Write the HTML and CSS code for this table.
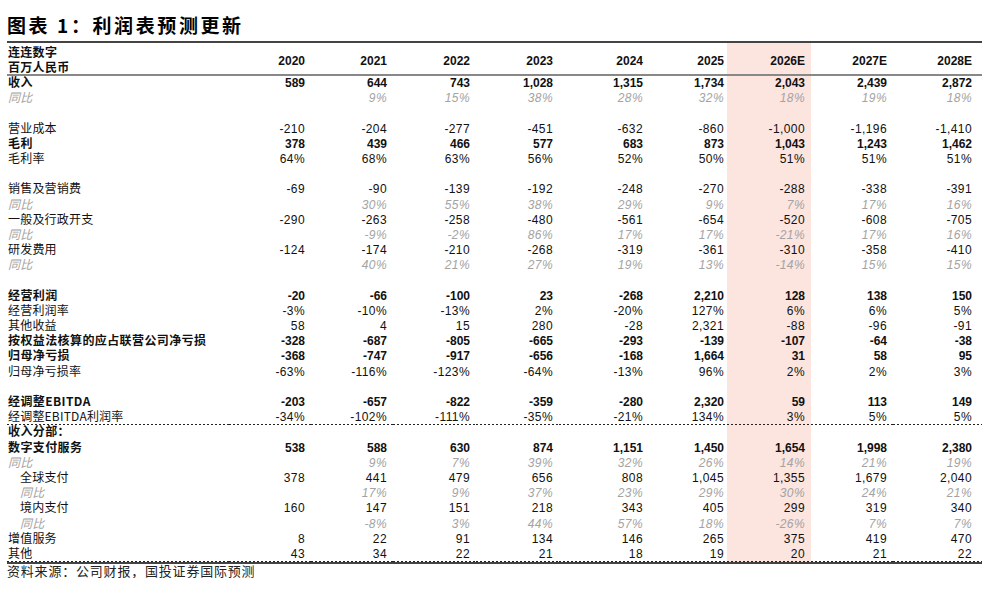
FILE: index.html
```html
<!DOCTYPE html>
<html lang="zh">
<head>
  <meta charset="UTF-8">
  <meta name="viewport" content="width=device-width, initial-scale=1.0">
  <title>利润表预测更新</title>
  <link rel="stylesheet" href="styles.css">
</head>
<body>
  <h1 class="title">图表 1：利润表预测更新</h1>
  <div class="sheet">
    <table class="fin">
      <colgroup>
        <col class="c-label">
        <col class="c-82"><col class="c-82"><col class="c-83"><col class="c-83">
        <col class="c-88"><col class="c-80"><col class="c-84"><col class="c-82"><col class="c-89">
      </colgroup>
      <thead>
        <tr>
          <th class="label"><div class="unit">连连数字<br>百万人民币</div></th>
          <th>2020</th><th>2021</th><th>2022</th><th>2023</th><th>2024</th><th>2025</th>
          <th class="est">2026E</th><th>2027E</th><th>2028E</th>
        </tr>
      </thead>
      <tbody>
        <tr class="bold">
          <td class="label">收入</td>
          <td>589</td><td>644</td><td>743</td><td>1,028</td><td>1,315</td><td>1,734</td><td class="est">2,043</td><td>2,439</td><td>2,872</td>
        </tr>
        <tr class="yoy">
          <td class="label">同比</td>
          <td></td><td>9%</td><td>15%</td><td>38%</td><td>28%</td><td>32%</td><td class="est">18%</td><td>19%</td><td>18%</td>
        </tr>
        <tr>
          <td class="label"></td>
          <td></td><td></td><td></td><td></td><td></td><td></td><td class="est"></td><td></td><td></td>
        </tr>
        <tr>
          <td class="label">营业成本</td>
          <td>-210</td><td>-204</td><td>-277</td><td>-451</td><td>-632</td><td>-860</td><td class="est">-1,000</td><td>-1,196</td><td>-1,410</td>
        </tr>
        <tr class="bold">
          <td class="label">毛利</td>
          <td>378</td><td>439</td><td>466</td><td>577</td><td>683</td><td>873</td><td class="est">1,043</td><td>1,243</td><td>1,462</td>
        </tr>
        <tr>
          <td class="label">毛利率</td>
          <td>64%</td><td>68%</td><td>63%</td><td>56%</td><td>52%</td><td>50%</td><td class="est">51%</td><td>51%</td><td>51%</td>
        </tr>
        <tr>
          <td class="label"></td>
          <td></td><td></td><td></td><td></td><td></td><td></td><td class="est"></td><td></td><td></td>
        </tr>
        <tr>
          <td class="label">销售及营销费</td>
          <td>-69</td><td>-90</td><td>-139</td><td>-192</td><td>-248</td><td>-270</td><td class="est">-288</td><td>-338</td><td>-391</td>
        </tr>
        <tr class="yoy">
          <td class="label">同比</td>
          <td></td><td>30%</td><td>55%</td><td>38%</td><td>29%</td><td>9%</td><td class="est">7%</td><td>17%</td><td>16%</td>
        </tr>
        <tr>
          <td class="label">一般及行政开支</td>
          <td>-290</td><td>-263</td><td>-258</td><td>-480</td><td>-561</td><td>-654</td><td class="est">-520</td><td>-608</td><td>-705</td>
        </tr>
        <tr class="yoy">
          <td class="label">同比</td>
          <td></td><td>-9%</td><td>-2%</td><td>86%</td><td>17%</td><td>17%</td><td class="est">-21%</td><td>17%</td><td>16%</td>
        </tr>
        <tr>
          <td class="label">研发费用</td>
          <td>-124</td><td>-174</td><td>-210</td><td>-268</td><td>-319</td><td>-361</td><td class="est">-310</td><td>-358</td><td>-410</td>
        </tr>
        <tr class="yoy">
          <td class="label">同比</td>
          <td></td><td>40%</td><td>21%</td><td>27%</td><td>19%</td><td>13%</td><td class="est">-14%</td><td>15%</td><td>15%</td>
        </tr>
        <tr>
          <td class="label"></td>
          <td></td><td></td><td></td><td></td><td></td><td></td><td class="est"></td><td></td><td></td>
        </tr>
        <tr class="bold">
          <td class="label">经营利润</td>
          <td>-20</td><td>-66</td><td>-100</td><td>23</td><td>-268</td><td>2,210</td><td class="est">128</td><td>138</td><td>150</td>
        </tr>
        <tr>
          <td class="label">经营利润率</td>
          <td>-3%</td><td>-10%</td><td>-13%</td><td>2%</td><td>-20%</td><td>127%</td><td class="est">6%</td><td>6%</td><td>5%</td>
        </tr>
        <tr>
          <td class="label">其他收益</td>
          <td>58</td><td>4</td><td>15</td><td>280</td><td>-28</td><td>2,321</td><td class="est">-88</td><td>-96</td><td>-91</td>
        </tr>
        <tr class="bold">
          <td class="label">按权益法核算的应占联营公司净亏损</td>
          <td>-328</td><td>-687</td><td>-805</td><td>-665</td><td>-293</td><td>-139</td><td class="est">-107</td><td>-64</td><td>-38</td>
        </tr>
        <tr class="bold">
          <td class="label">归母净亏损</td>
          <td>-368</td><td>-747</td><td>-917</td><td>-656</td><td>-168</td><td>1,664</td><td class="est">31</td><td>58</td><td>95</td>
        </tr>
        <tr>
          <td class="label">归母净亏损率</td>
          <td>-63%</td><td>-116%</td><td>-123%</td><td>-64%</td><td>-13%</td><td>96%</td><td class="est">2%</td><td>2%</td><td>3%</td>
        </tr>
        <tr>
          <td class="label"></td>
          <td></td><td></td><td></td><td></td><td></td><td></td><td class="est"></td><td></td><td></td>
        </tr>
        <tr class="bold">
          <td class="label">经调整EBITDA</td>
          <td>-203</td><td>-657</td><td>-822</td><td>-359</td><td>-280</td><td>2,320</td><td class="est">59</td><td>113</td><td>149</td>
        </tr>
        <tr class="dashed">
          <td class="label">经调整EBITDA利润率</td>
          <td>-34%</td><td>-102%</td><td>-111%</td><td>-35%</td><td>-21%</td><td>134%</td><td class="est">3%</td><td>5%</td><td>5%</td>
        </tr>
        <tr class="bold">
          <td class="label">收入分部：</td>
          <td></td><td></td><td></td><td></td><td></td><td></td><td class="est"></td><td></td><td></td>
        </tr>
        <tr class="bold">
          <td class="label">数字支付服务</td>
          <td>538</td><td>588</td><td>630</td><td>874</td><td>1,151</td><td>1,450</td><td class="est">1,654</td><td>1,998</td><td>2,380</td>
        </tr>
        <tr class="yoy">
          <td class="label">同比</td>
          <td></td><td>9%</td><td>7%</td><td>39%</td><td>32%</td><td>26%</td><td class="est">14%</td><td>21%</td><td>19%</td>
        </tr>
        <tr>
          <td class="label sub">全球支付</td>
          <td>378</td><td>441</td><td>479</td><td>656</td><td>808</td><td>1,045</td><td class="est">1,355</td><td>1,679</td><td>2,040</td>
        </tr>
        <tr class="yoy">
          <td class="label sub">同比</td>
          <td></td><td>17%</td><td>9%</td><td>37%</td><td>23%</td><td>29%</td><td class="est">30%</td><td>24%</td><td>21%</td>
        </tr>
        <tr>
          <td class="label sub">境内支付</td>
          <td>160</td><td>147</td><td>151</td><td>218</td><td>343</td><td>405</td><td class="est">299</td><td>319</td><td>340</td>
        </tr>
        <tr class="yoy">
          <td class="label sub">同比</td>
          <td></td><td>-8%</td><td>3%</td><td>44%</td><td>57%</td><td>18%</td><td class="est">-26%</td><td>7%</td><td>7%</td>
        </tr>
        <tr>
          <td class="label">增值服务</td>
          <td>8</td><td>22</td><td>91</td><td>134</td><td>146</td><td>265</td><td class="est">375</td><td>419</td><td>470</td>
        </tr>
        <tr class="dashed">
          <td class="label">其他</td>
          <td>43</td><td>34</td><td>22</td><td>21</td><td>18</td><td>19</td><td class="est">20</td><td>21</td><td>22</td>
        </tr>
      </tbody>
    </table>
  </div>
  <p class="source">资料来源：公司财报，国投证券国际预测</p>
</body>
</html>
```

FILE: styles.css
```css
body {
  margin: 0;
  padding: 0 5px 0 7px;
  font-family: "Liberation Sans", Arial, sans-serif;
  color: #111;
  background-color: #fff;
}
.title {
  margin: 0;
  height: 28px;
  padding-top: 13px;
  font-family: "Noto Sans CJK SC", sans-serif;
  font-size: 19px;
  font-weight: 700;
  line-height: 24px;
  letter-spacing: 2.6px;
  color: #000;
}
.sheet {
  width: 975px;
  border-top: 2px solid #444;
  border-bottom: 2px solid #444;
}
.fin {
  width: 975px;
  table-layout: fixed;
  border-collapse: collapse;
}
.c-label { width: 222px; }
.c-80 { width: 80px; }
.c-82 { width: 82px; }
.c-83 { width: 83px; }
.c-84 { width: 84px; }
.c-88 { width: 88px; }
.c-89 { width: 89px; }
th, td {
  padding: 0 6px 0 0;
  text-align: right;
  white-space: nowrap;
  font-size: 12px;
  line-height: 15px;
}
td {
  height: 15.2px;
  letter-spacing: 0.4px;
}
th {
  height: 26px;
  padding-bottom: 5px;
  vertical-align: bottom;
  font-weight: 700;
  border-bottom: 2px solid #888;
}
th:nth-child(6), td:nth-child(6) { padding-right: 4px; }
th:nth-child(7), td:nth-child(7) { padding-right: 3px; }
th:nth-child(10), td:nth-child(10) { padding-right: 10px; }
.label {
  padding-left: 1px;
  text-align: left;
  font-family: "Noto Sans CJK SC", sans-serif;
  letter-spacing: 0.2px;
}
td.label {
  height: 11.2px;
  line-height: 11px;
  padding-bottom: 4px;
}
th.label {
  height: 31px;
  padding-bottom: 0;
  vertical-align: top;
}
.unit {
  box-sizing: border-box;
  height: 31px;
  padding-top: 1px;
  line-height: 15px;
  letter-spacing: 0.3px;
}
.sub {
  padding-left: 13px;
}
.bold td {
  font-weight: 700;
  letter-spacing: 0;
}
.bold td.label {
  letter-spacing: 0.4px;
}
.yoy td {
  color: #a3a3a3;
  font-style: italic;
}
.dashed td {
  background-image: linear-gradient(to right, #222 50%, transparent 50%);
  background-size: 4px 1px;
  background-repeat: repeat-x;
  background-position: left bottom;
}
.est {
  background-color: #fce4df;
}
.source {
  margin: 0;
  font-family: "Noto Sans CJK SC", sans-serif;
  font-size: 13px;
  line-height: 14px;
  letter-spacing: 0.8px;
  color: #222;
}
```
